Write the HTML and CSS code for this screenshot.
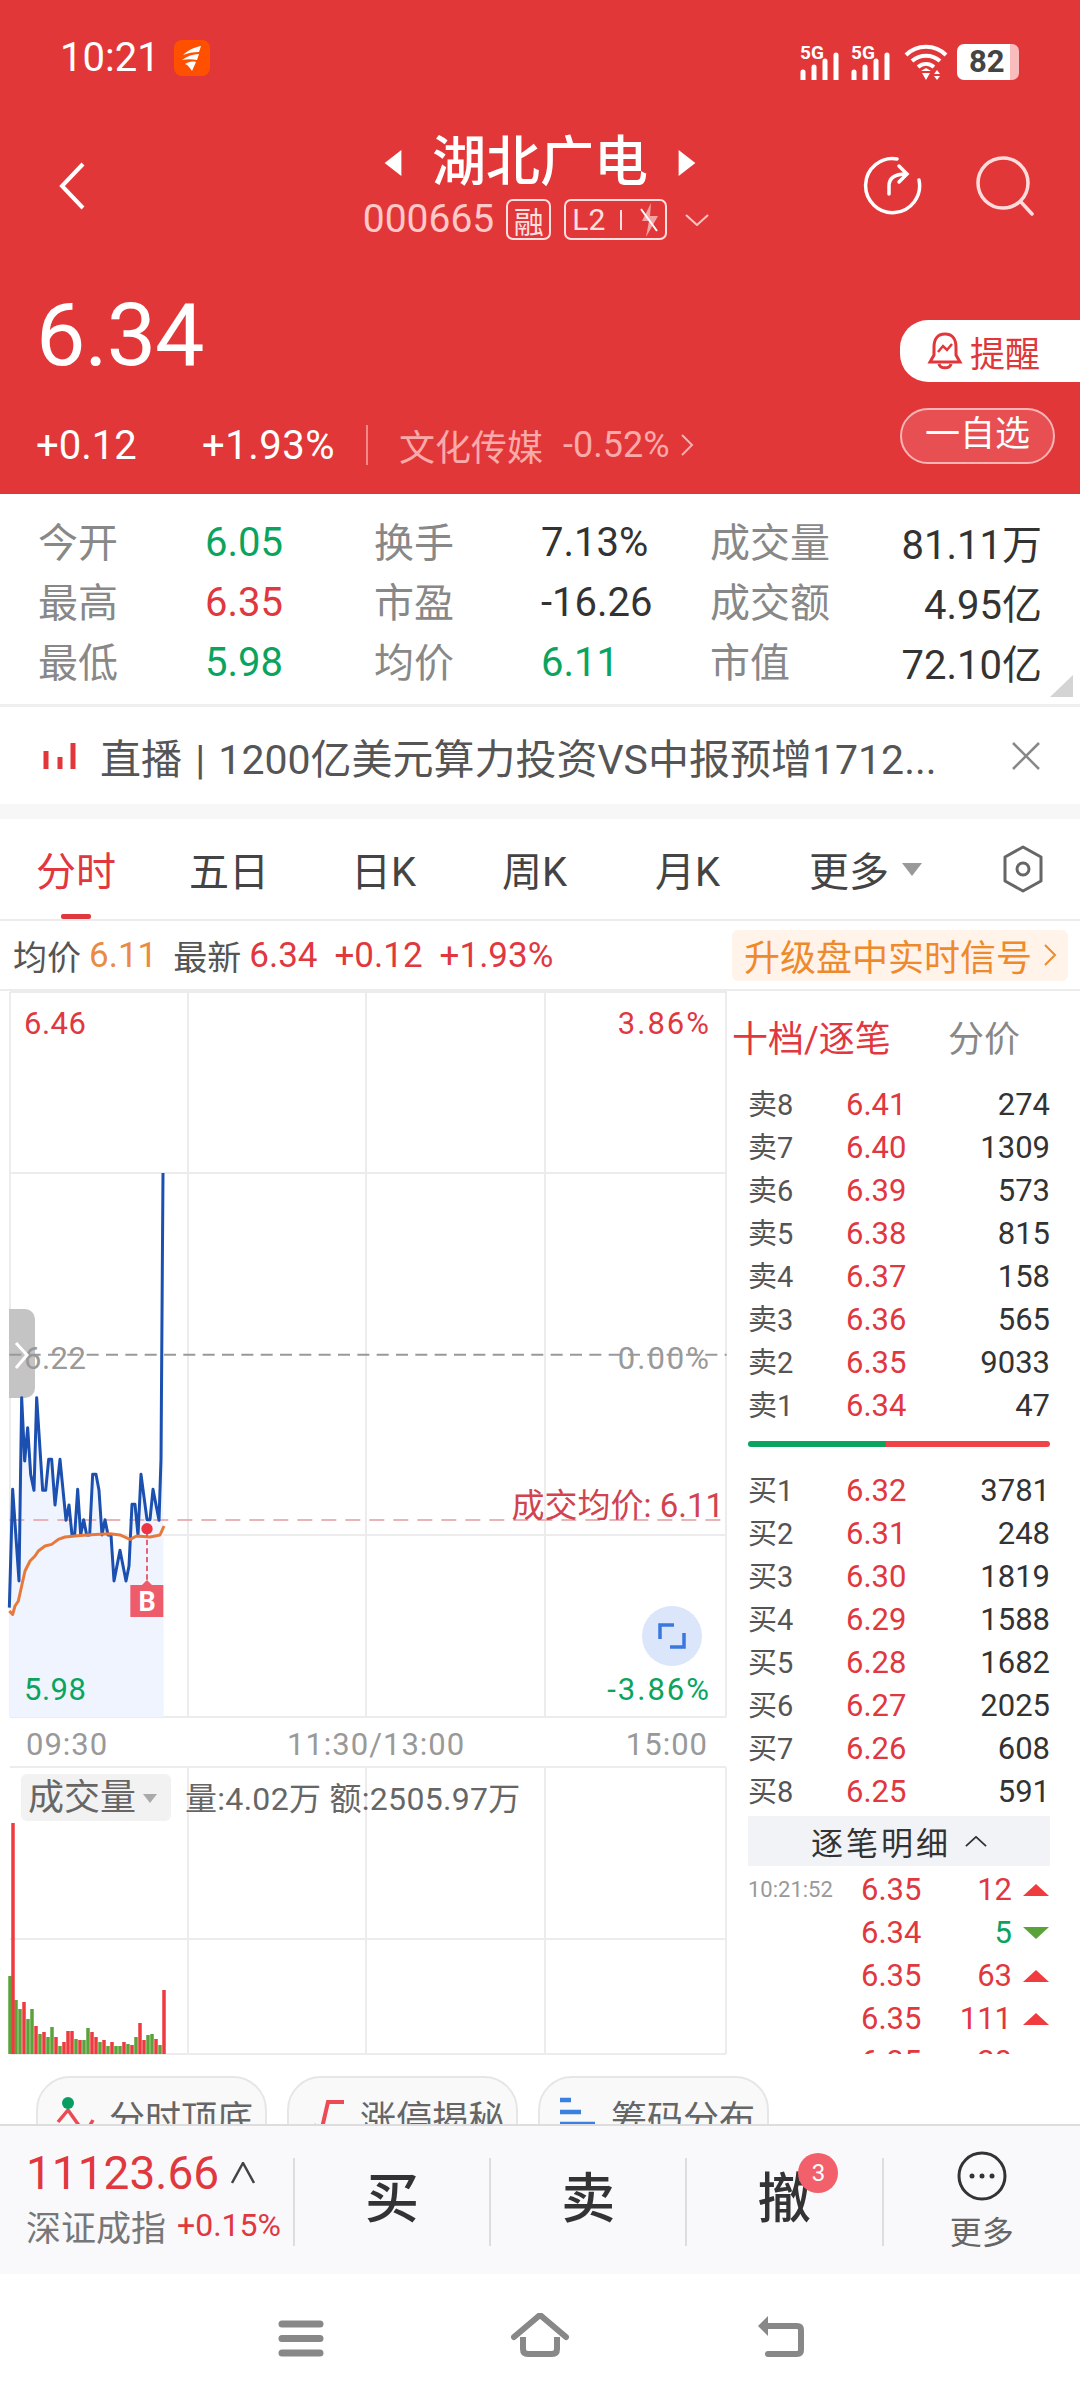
FILE: index.html
```html
<!DOCTYPE html>
<html lang="zh-CN">
<head>
    <meta charset="UTF-8">
    <meta name="viewport" content="width=device-width, initial-scale=1.0">
    <title>湖北广电</title>
    <link rel="stylesheet" href="styles.css">
</head>
<body>
<div class="phone">
    <header class="head">
        <div class="status">
            <span class="clock">10:21</span>
            <svg class="app-icon" viewBox="0 0 36 36">
                <rect width="36" height="36" rx="8" fill="#ff5000"/>
                <path d="M9 15 C14 10 21 7 27 6 L25 12 C19 12 14 13 9 15Z M8 20 C13 16 19 14 25 14 L23 20 C18 19 13 19 8 20Z M11 24 C14 22 18 21 22 22 L18 31 C16 28 14 25 11 24Z" fill="#fff"/>
            </svg>
            <div class="status-right">
                <svg class="signal" viewBox="0 -8 42 44"><text x="0" y="15" class="sig-text">5G</text><path d="M3 36V28M14 36V23M25 36V17M36 36V11" stroke="#fff" stroke-width="5" stroke-linecap="round"/></svg>
                <svg class="signal" viewBox="0 -8 42 44"><text x="0" y="15" class="sig-text">5G</text><path d="M3 36V28M14 36V23M25 36V17M36 36V11" stroke="#fff" stroke-width="5" stroke-linecap="round"/></svg>
                <svg class="wifi" viewBox="0 0 44 36">
                    <path d="M2 11 C13 0 31 0 42 11M8 17 C16 10 28 10 36 17M14 23 C19 19 25 19 30 23" fill="none" stroke="#fff" stroke-width="4"/>
                    <path d="M17 27 L22 24 L27 27Z M18 29 H26 L22 36Z M30 30 L33 26 L36 30Z M30 32 H36 L33 36Z" fill="#fff"/>
                </svg>
                <div class="battery"><span class="battery-num">82</span></div>
            </div>
        </div>
        <div class="nav">
            <svg class="back" viewBox="0 0 28 48"><path d="M25 2 L4 24 L25 46" fill="none" stroke="#fff" stroke-width="4"/></svg>
            <div class="nav-mid">
                <div class="title-row">
                    <svg class="title-arrow" viewBox="0 0 18 28"><path d="M18 0V28L0 14Z" fill="#fff"/></svg>
                    <span class="title">湖北广电</span>
                    <svg class="title-arrow" viewBox="0 0 18 28"><path d="M0 0V28L18 14Z" fill="#fff"/></svg>
                </div>
                <div class="code-row">
                    <span class="code">000665</span>
                    <span class="tag tag-rong">融</span>
                    <span class="tag tag-l2">L2<i class="tag-bar"></i><svg class="bolt" viewBox="0 0 22 34"><path d="M13 0 L4 18 H11 L8 34 L20 13 H12 Z" fill="#f4a3a3"/><path d="M3 6 L19 28" stroke="#fff" stroke-width="2"/></svg></span>
                    <svg class="code-down" viewBox="0 0 24 12"><path d="M1 1 L12 11 L23 1" fill="none" stroke="#ffc4c4" stroke-width="2"/></svg>
                </div>
            </div>
            <div class="nav-right">
                <svg class="nav-icon" viewBox="0 0 60 60"><path d="M34 3 A27 27 0 1 0 56 24" fill="none" stroke="#fff" stroke-width="3.500" stroke-linecap="round"/><path d="M26 38 V30 C26 22 32 18 43 18 M36 10 L44 18 L36 26" fill="none" stroke="#fff" stroke-width="3.500" stroke-linecap="round"/></svg>
                <svg class="nav-icon search" viewBox="0 0 60 60"><circle cx="27" cy="27" r="25" fill="none" stroke="#ffdcdc" stroke-width="3.500"/><path d="M45 46 L56 58" stroke="#ffdcdc" stroke-width="3.500" stroke-linecap="round"/></svg>
            </div>
        </div>
        <div class="quote">
            <div class="quote-left">
                <div class="price">6.34</div>
                <div class="change-row">
                    <span class="chg-a">+0.12</span>
                    <span class="chg-b">+1.93%</span>
                    <i class="chg-line"></i>
                    <span class="sector">文化传媒</span>
                    <span class="sector-pct">-0.52%</span>
                    <svg class="sector-arrow" viewBox="0 0 14 24"><path d="M2 2 L12 12 L2 22" fill="none" stroke="#f7b0b0" stroke-width="2"/></svg>
                </div>
            </div>
            <div class="quote-right">
                <div class="remind">
                    <svg class="bell" viewBox="0 0 36 40"><path d="M18 3 C10 3 7 9 7 16 V24 L3 31 H33 L29 24 V16 C29 9 26 3 18 3Z M12 33 C13 38 23 38 24 33" fill="none" stroke="#e1373a" stroke-width="3"/><path d="M11 21 L16 15 L20 19 L25 13" fill="none" stroke="#e1373a" stroke-width="2.500"/></svg>
                    <span>提醒</span>
                </div>
                <div class="watch">一自选</div>
            </div>
        </div>
    </header>

    <section class="stats">
        <span class="lab">今开</span><span class="val down">6.05</span>
        <span class="lab">换手</span><span class="val">7.13%</span>
        <span class="lab">成交量</span><span class="val right">81.11万</span>
        <span class="lab">最高</span><span class="val up">6.35</span>
        <span class="lab">市盈</span><span class="val">-16.26</span>
        <span class="lab">成交额</span><span class="val right">4.95亿</span>
        <span class="lab">最低</span><span class="val down">5.98</span>
        <span class="lab">均价</span><span class="val down">6.11</span>
        <span class="lab">市值</span><span class="val right">72.10亿</span>
        <i class="corner"></i>
    </section>

    <section class="news">
        <svg class="news-icon" viewBox="0 0 33 26"><path d="M3 8V26M17 14V26M30 0V26" stroke="#e1373a" stroke-width="5"/></svg>
        <span class="news-text">直播 | 1200亿美元算力投资VS中报预增1712...</span>
        <svg class="news-close" viewBox="0 0 28 28"><path d="M1 1 L27 27 M27 1 L1 27" stroke="#888" stroke-width="2.500"/></svg>
    </section>

    <nav class="tabs">
        <span class="tab active">分时</span>
        <span class="tab">五日</span>
        <span class="tab">日K</span>
        <span class="tab">周K</span>
        <span class="tab">月K</span>
        <span class="tab">更多<i class="tab-tri"></i></span>
        <svg class="hex" viewBox="0 0 42 48"><path d="M21 2 L39 12 V36 L21 46 L3 36 V12Z" fill="none" stroke="#666" stroke-width="3" stroke-linejoin="round"/><circle cx="21" cy="24" r="6" fill="none" stroke="#666" stroke-width="3"/></svg>
    </nav>

    <section class="info">
        <span class="info-lab">均价</span><span class="info-val orange">6.11</span>
        <span class="info-lab gap-l">最新</span><span class="info-val up">6.34</span>
        <span class="info-val up gap-m">+0.12</span>
        <span class="info-val up gap-m">+1.93%</span>
        <div class="signal-box"><span>升级盘中实时信号</span><svg class="signal-arrow" viewBox="0 0 14 24"><path d="M2 2 L12 12 L2 22" fill="none" stroke="#f08a2c" stroke-width="2"/></svg></div>
    </section>

    <main class="market">
        <svg class="chart" viewBox="0 0 727 1065">
            <g class="grid">
                <path d="M10 1V726M188 0V726M366 0V726M545 0V726M726 0V726"/>
                <path d="M10 1H726M10 182H726M10 544H726M10 726H726"/>
                <path d="M10 776H726M188 776V1063M366 776V1063M545 776V1063M726 776V1063M10 948H726M10 1063H726"/>
            </g>
            <path d="M9 318 H25 A10 10 0 0 1 35 328 V397 A10 10 0 0 1 25 407 H9Z" fill="#c4c4c4"/>
            <g transform="translate(0 290) scale(0.33333)">
                <polygon class="area" points="28,980 38,625 57,900 65,350 74,540 83,440 92,580 102,628 110,350 128,628 137,628 146,535 155,535 165,672 180,535 198,718 207,672 216,762 224,762 233,625 242,762 251,716 260,762 269,762 278,580 288,580 297,628 306,762 315,716 324,762 333,762 342,900 360,808 378,900 387,855 396,670 405,670 414,762 423,580 441,716 450,716 459,625 477,718 483,535 489,-324 491,1308 28,1308"/>
                <path class="dash-gray-thick" d="M28 221H2180"/>
                <path class="dash-pink" d="M28 717H2180"/>
                <polyline class="price-line" points="28,980 38,625 57,900 65,350 74,540 83,440 92,580 102,628 110,350 128,628 137,628 146,535 155,535 165,672 180,535 198,718 207,672 216,762 224,762 233,625 242,762 251,716 260,762 269,762 278,580 288,580 297,628 306,762 315,716 324,762 333,762 342,900 360,808 378,900 387,855 396,670 405,670 414,762 423,580 441,716 450,716 459,625 477,718 483,535 489,-324"/>
                <polyline class="avg-line" points="28,990 38,1000 45,975 55,960 65,915 75,870 90,840 105,825 115,810 135,795 155,790 175,775 195,768 225,765 260,762 300,760 330,758 360,762 390,775 410,765 450,768 480,762 492,735"/>
                <path class="dash-red" d="M441 750V900"/>
                <circle cx="441" cy="743" r="17" fill="#ee3344"/>
                <path d="M391 912 H426 L441 897 L456 912 H490 V1008 H391Z" fill="#ee5c6c"/>
            </g>
            <text x="147" y="620" class="b-mark" text-anchor="middle">B</text>

            <text x="24" y="43" class="axis up">6.46</text>
            <text x="711" y="43" class="axis pct up" text-anchor="end">3.86%</text>
            <text x="24" y="378" class="axis gray">6.22</text>
            <text x="711" y="378" class="axis pct gray" text-anchor="end">0.00%</text>
            <text x="24" y="709" class="axis down">5.98</text>
            <text x="711" y="709" class="axis pct down" text-anchor="end">-3.86%</text>
            <text x="724" y="526" class="avg-label" text-anchor="end">成交均价: 6.11</text>

            <path d="M16 352 L27 364 L16 377" fill="none" stroke="#fff" stroke-width="3"/>

            <circle cx="672" cy="645" r="30" fill="#dbe6fb"/>
            <path d="M660 648 V634 H674 M684 642 V656 H670" fill="none" stroke="#3a78e0" stroke-width="3.500"/>

            <text x="26" y="764" class="time">09:30</text>
            <text x="287" y="764" class="time">11:30/13:00</text>
            <text x="708" y="764" class="time" text-anchor="end">15:00</text>

            <rect x="21" y="783" width="150" height="47" rx="6" fill="#f2f2f2"/>
            <text x="28" y="819" class="vol-name">成交量</text>
            <path d="M143 803 H157 L150 812Z" fill="#aaa"/>
            <text x="185" y="819" class="vol-text">量:4.02万 额:2505.97万</text>

            <path class="vol-green" d="M10 1063v-78M16 1063v-54M20 1063v-45M28 1063v-35M32 1063v-45M40 1063v-20M48 1063v-17M52 1063v-27M60 1063v-8M76 1063v-15M84 1063v-14M88 1063v-26M100 1063v-12M108 1063v-8M116 1063v-8M120 1063v-8M128 1063v-10M136 1063v-17M148 1063v-19M152 1063v-20M160 1063v-9"/>
            <path class="vol-red" d="M13 1063v-231M24 1063v-52M36 1063v-28M44 1063v-22M56 1063v-17M64 1063v-12M68 1063v-23M72 1063v-23M80 1063v-14M92 1063v-22M96 1063v-17M104 1063v-14M112 1063v-12M124 1063v-12M132 1063v-9M140 1063v-31M144 1063v-14M156 1063v-15M164 1063v-64"/>
        </svg>

        <aside class="book">
            <div class="book-tabs"><span class="book-tab-on">十档/逐笔</span><span class="book-tab">分价</span></div>
            <div class="row"><span class="row-lab">卖8</span><span class="up">6.41</span><span class="qty">274</span></div>
            <div class="row"><span class="row-lab">卖7</span><span class="up">6.40</span><span class="qty">1309</span></div>
            <div class="row"><span class="row-lab">卖6</span><span class="up">6.39</span><span class="qty">573</span></div>
            <div class="row"><span class="row-lab">卖5</span><span class="up">6.38</span><span class="qty">815</span></div>
            <div class="row"><span class="row-lab">卖4</span><span class="up">6.37</span><span class="qty">158</span></div>
            <div class="row"><span class="row-lab">卖3</span><span class="up">6.36</span><span class="qty">565</span></div>
            <div class="row"><span class="row-lab">卖2</span><span class="up">6.35</span><span class="qty">9033</span></div>
            <div class="row"><span class="row-lab">卖1</span><span class="up">6.34</span><span class="qty">47</span></div>
            <div class="ratio"><i class="ratio-buy"></i><i class="ratio-sell"></i></div>
            <div class="row"><span class="row-lab">买1</span><span class="up">6.32</span><span class="qty">3781</span></div>
            <div class="row"><span class="row-lab">买2</span><span class="up">6.31</span><span class="qty">248</span></div>
            <div class="row"><span class="row-lab">买3</span><span class="up">6.30</span><span class="qty">1819</span></div>
            <div class="row"><span class="row-lab">买4</span><span class="up">6.29</span><span class="qty">1588</span></div>
            <div class="row"><span class="row-lab">买5</span><span class="up">6.28</span><span class="qty">1682</span></div>
            <div class="row"><span class="row-lab">买6</span><span class="up">6.27</span><span class="qty">2025</span></div>
            <div class="row"><span class="row-lab">买7</span><span class="up">6.26</span><span class="qty">608</span></div>
            <div class="row"><span class="row-lab">买8</span><span class="up">6.25</span><span class="qty">591</span></div>
            <div class="detail-head"><span>逐笔明细</span><svg class="detail-up" viewBox="0 0 24 12"><path d="M1 11 L12 1 L23 11" fill="none" stroke="#333" stroke-width="2"/></svg></div>
            <div class="tick"><span class="tick-time">10:21:52</span><span class="up">6.35</span><span class="tick-qty up">12</span><i class="tri-up"></i></div>
            <div class="tick"><span class="tick-time"></span><span class="up">6.34</span><span class="tick-qty down">5</span><i class="tri-down"></i></div>
            <div class="tick"><span class="tick-time"></span><span class="up">6.35</span><span class="tick-qty up">63</span><i class="tri-up"></i></div>
            <div class="tick"><span class="tick-time"></span><span class="up">6.35</span><span class="tick-qty up">111</span><i class="tri-up"></i></div>
            <div class="tick"><span class="tick-time"></span><span class="up">6.35</span><span class="tick-qty up">20</span><i class="tri-up"></i></div>
        </aside>
    </main>

    <section class="chips">
        <div class="chip">
            <svg class="chip-icon" viewBox="0 0 40 48"><path d="M3 32 L13 20 L30 44 L38 30" fill="none" stroke="#ec4a55" stroke-width="3.500"/><circle cx="13" cy="13" r="6" fill="#0a9d62"/><circle cx="27" cy="45" r="6" fill="#ec4a55"/></svg>
            <span>分时顶底</span>
        </div>
        <div class="chip">
            <svg class="chip-icon" viewBox="0 0 40 48"><path d="M4 50 L10 36 L16 38 L22 12 H38" fill="none" stroke="#ec4a55" stroke-width="4"/></svg>
            <span>涨停揭秘</span>
        </div>
        <div class="chip">
            <svg class="chip-icon" viewBox="0 0 40 48"><path d="M3 10H14M3 22H24M3 34H38" stroke="#3a80e0" stroke-width="4.500"/><path d="M3 46H14" stroke="#ec4a55" stroke-width="4.500"/></svg>
            <span>筹码分布</span>
        </div>
    </section>

    <section class="trade">
        <div class="index">
            <div class="index-top"><span class="index-num">11123.66</span><svg class="index-up" viewBox="0 0 24 22"><path d="M1 21 L12 1 L23 21" fill="none" stroke="#444" stroke-width="2.500"/></svg></div>
            <div class="index-bottom"><span class="index-name">深证成指</span><span class="index-pct">+0.15%</span></div>
        </div>
        <div class="action"><span class="action-text">买</span></div>
        <div class="action"><span class="action-text">卖</span></div>
        <div class="action"><span class="action-text">撤</span><span class="badge">3</span></div>
        <div class="action more">
            <svg class="more-icon" viewBox="0 0 50 50"><circle cx="25" cy="25" r="23" fill="none" stroke="#333" stroke-width="3"/><circle cx="15" cy="25" r="2.500" fill="#333"/><circle cx="25" cy="25" r="2.500" fill="#333"/><circle cx="35" cy="25" r="2.500" fill="#333"/></svg>
            <span class="more-text">更多</span>
        </div>
    </section>

    <footer class="sysnav">
        <svg class="sys-menu" viewBox="0 0 46 37"><path d="M4 4H42M4 18.500H42M4 33H42" stroke="#888" stroke-width="7" stroke-linecap="round"/></svg>
        <svg class="sys-home" viewBox="0 0 58 44"><path d="M3 24 L29 2 L55 24" fill="none" stroke="#888" stroke-width="6" stroke-linecap="round" stroke-linejoin="round"/><path d="M12 24V36 Q12 41 17 41 H41 Q46 41 46 36 V24" fill="none" stroke="#888" stroke-width="6"/></svg>
        <svg class="sys-back" viewBox="0 0 48 42"><path d="M2 11 L12 1 V21Z" fill="#888"/><path d="M8 11 H41 Q45 11 45 15 V35 Q45 39 41 39 H12" fill="none" stroke="#888" stroke-width="6" stroke-linecap="round"/></svg>
    </footer>
</div>
</body>
</html>
```

FILE: styles.css
```css
* {
    box-sizing: border-box;
}
html, body {
    margin: 0;
    padding: 0;
}
body {
    background-color: #fff;
    font-family: Roboto, "Noto Sans CJK SC", sans-serif;
    color: #333;
}
i {
    display: block;
}
svg {
    display: block;
    flex: none;
}
.phone {
    width: 1080px;
    height: 2400px;
    overflow: hidden;
}
.up {
    color: #e1373f;
    fill: #e1373f;
}
.down {
    color: #0aa45f;
    fill: #0aa45f;
}
.gray {
    fill: #999;
}
.orange {
    color: #ea8b45;
}

/* red header */
.head {
    height: 494px;
    background-color: #e23739;
    color: #fff;
}
.status {
    height: 116px;
    display: flex;
    align-items: center;
    padding-left: 60px;
}
.clock {
    font-size: 40px;
    line-height: 48px;
    width: 114px;
}
.app-icon {
    width: 36px;
    height: 36px;
}
.status-right {
    margin-left: auto;
    margin-right: 61px;
    display: flex;
    align-items: flex-end;
}
.signal {
    width: 42px;
    height: 44px;
    margin-right: 9px;
}
.sig-text {
    font-size: 19px;
    font-weight: 700;
    fill: #fff;
}
.wifi {
    width: 44px;
    height: 36px;
    margin-left: 2px;
    margin-right: 9px;
}
.battery {
    width: 62px;
    height: 36px;
    border-radius: 7px;
    background: linear-gradient(90deg, #fff 86%, #f8bcbc 86%);
    padding-left: 12px;
}
.battery-num {
    font-size: 31px;
    line-height: 36px;
    font-weight: 700;
    color: #444;
}
.nav {
    height: 134px;
    display: grid;
    grid-template-columns: 1fr auto 1fr;
    align-items: start;
    padding-top: 16px;
}
.back {
    width: 28px;
    height: 48px;
    margin: 30px 0 0 58px;
}
.nav-mid {
    display: flex;
    flex-direction: column;
    align-items: center;
}
.title-row {
    display: flex;
    align-items: center;
    height: 60px;
    margin-top: 1px;
}
.title {
    font-size: 54px;
    line-height: 60px;
    font-weight: 500;
    margin: 0 30px;
}
.title-arrow {
    width: 18px;
    height: 26px;
}
.code-row {
    display: flex;
    align-items: center;
    height: 41px;
    margin-top: 6px;
    margin-right: 8px;
}
.code {
    font-size: 39px;
    line-height: 41px;
    color: #ffc9c9;
    margin-right: 12px;
}
.tag {
    height: 41px;
    border: 2px solid #ffe0e0;
    border-radius: 7px;
    display: flex;
    align-items: center;
    color: #ffe0e0;
}
.tag-rong {
    width: 45px;
    justify-content: center;
    font-size: 30px;
    margin-right: 13px;
}
.tag-l2 {
    width: 103px;
    padding-left: 6px;
    font-size: 30px;
    margin-right: 18px;
}
.tag-bar {
    width: 2px;
    height: 20px;
    background-color: #ffe0e0;
    margin: 0 16px 0 15px;
}
.bolt {
    width: 22px;
    height: 34px;
}
.code-down {
    width: 24px;
    height: 12px;
}
.nav-right {
    display: flex;
    justify-content: flex-end;
    margin-top: 24px;
    padding-right: 44px;
}
.nav-icon {
    width: 60px;
    height: 60px;
}
.search {
    margin-left: 53px;
}
.quote {
    height: 244px;
    display: flex;
    justify-content: space-between;
}
.quote-left {
    padding: 40px 0 0 36px;
}
.price {
    font-size: 88px;
    line-height: 90px;
    letter-spacing: -1px;
}
.change-row {
    display: flex;
    align-items: center;
    height: 60px;
    margin-top: 35px;
}
.chg-a, .chg-b {
    font-size: 40px;
}
.chg-a {
    width: 166px;
}
.chg-b {
    width: 164px;
    letter-spacing: 0.5px;
}
.chg-line {
    width: 2px;
    height: 40px;
    background-color: #f08a8a;
    margin-right: 31px;
}
.sector {
    font-size: 36px;
    color: #f8aaaa;
    margin-right: 20px;
}
.sector-pct {
    font-size: 36px;
    color: #f8aaaa;
    margin-right: 10px;
}
.sector-arrow {
    width: 14px;
    height: 24px;
}
.quote-right {
    width: 180px;
    padding-top: 70px;
}
.remind {
    height: 62px;
    background-color: #fff;
    border-radius: 28px 0 0 28px;
    display: flex;
    align-items: center;
    padding-left: 27px;
    font-size: 35px;
    color: #e1373a;
}
.bell {
    width: 36px;
    height: 40px;
    margin-right: 7px;
}
.watch {
    width: 155px;
    height: 56px;
    margin-top: 26px;
    border: 2px solid #f8b5b5;
    border-radius: 28px;
    background-color: #e84f52;
    font-size: 35px;
    line-height: 50px;
    text-align: center;
}

/* stats table */
.stats {
    position: relative;
    height: 213px;
    border-bottom: 3px solid #efefef;
    padding: 18px 38px 0;
    display: grid;
    grid-template-columns: 167px 169px 167px 169px 120px 1fr;
    grid-auto-rows: 60px;
    align-items: center;
    font-size: 40px;
}
.lab {
    color: #888;
    padding-bottom: 5px;
}
.val {
    font-size: 40px;
    color: #333;
}
.val.up {
    color: #e1373f;
}
.val.down {
    color: #0aa45f;
}
.right {
    text-align: right;
}
.corner {
    position: absolute;
    right: 7px;
    bottom: 7px;
    width: 0;
    height: 0;
    border-left: 23px solid transparent;
    border-bottom: 22px solid #d4d4d4;
}

/* news strip */
.news {
    height: 97px;
    display: flex;
    align-items: center;
    padding-left: 43px;
}
.news-icon {
    width: 33px;
    height: 26px;
    margin-right: 24px;
}
.news-text {
    width: 912px;
    font-size: 41px;
    word-spacing: 3px;
    color: #555;
    white-space: nowrap;
}
.news-close {
    width: 28px;
    height: 28px;
}

/* period tabs */
.tabs {
    border-top: 15px solid #f7f7f7;
    height: 117px;
    border-bottom: 2px solid #ececec;
    display: grid;
    grid-template-columns: 153px 162px 151px 153px 154px 193px auto;
    align-items: center;
    padding-left: 36px;
    font-size: 40px;
}
.tab {
    position: relative;
    display: flex;
    align-items: center;
    height: 100px;
    color: #444;
}
.tab.active {
    color: #e1373f;
}
.tab.active::after {
    content: "";
    position: absolute;
    left: 25px;
    bottom: 0;
    width: 30px;
    height: 5px;
    border-radius: 2px;
    background-color: #e1373f;
}
.tab-tri {
    margin-left: 13px;
    width: 0;
    height: 0;
    border-left: 10px solid transparent;
    border-right: 10px solid transparent;
    border-top: 13px solid #999;
}
.hex {
    width: 42px;
    height: 48px;
}

/* info line */
.info {
    height: 70px;
    border-bottom: 2px solid #ececec;
    display: flex;
    align-items: center;
    padding: 0 12px 0 13px;
    font-size: 34px;
    white-space: nowrap;
}
.info-lab {
    color: #555;
    margin-right: 8px;
}
.info-val {
    font-size: 35px;
}
.gap-l {
    margin-left: 16px;
}
.gap-m {
    margin-left: 17px;
}
.signal-box {
    margin-left: auto;
    width: 336px;
    height: 51px;
    border-radius: 6px;
    background-color: #fff3ea;
    color: #ef8a2c;
    font-size: 36px;
    display: flex;
    align-items: center;
    padding-left: 12px;
}
.signal-arrow {
    width: 14px;
    height: 24px;
    margin-left: 11px;
}

/* chart + order book */
.market {
    height: 1065px;
    display: flex;
}
.chart {
    width: 727px;
    height: 1065px;
}
.grid path {
    fill: none;
    stroke: #ececec;
    stroke-width: 2;
}
.area {
    fill: #eff4fe;
}
.price-line {
    fill: none;
    stroke: #1b4fb0;
    stroke-width: 9;
    stroke-linejoin: round;
}
.avg-line {
    fill: none;
    stroke: #e8793c;
    stroke-width: 9;
    stroke-linejoin: round;
}
.dash-gray-thick {
    stroke: #999;
    stroke-width: 6;
    stroke-dasharray: 36 22;
}
.dash-pink {
    stroke: #eab3b8;
    stroke-width: 6;
    stroke-dasharray: 45 27;
}
.dash-red {
    stroke: #e0475a;
    stroke-width: 5;
    stroke-dasharray: 16 10;
}
.b-mark {
    font-size: 27px;
    font-weight: 700;
    fill: #fff;
}
.axis {
    font-size: 31px;
    letter-spacing: 0.5px;
}
.axis.pct {
    letter-spacing: 2px;
}
.avg-label {
    font-size: 33px;
    fill: #d0434f;
}
.time {
    font-size: 31px;
    letter-spacing: 1px;
    fill: #999;
}
.vol-name {
    font-size: 36px;
    fill: #666;
}
.vol-text {
    font-size: 32px;
    letter-spacing: 0.3px;
    fill: #666;
}
.vol-green, .vol-red {
    fill: none;
    stroke-width: 3.5;
}
.vol-green {
    stroke: #5aa23a;
}
.vol-red {
    stroke: #ee3b3f;
}
.book {
    flex: 1;
    height: 1063px;
    overflow: hidden;
    padding: 0 30px 0 21px;
}
.book-tabs {
    height: 90px;
    display: flex;
    align-items: center;
    margin-left: -16px;
    font-size: 36px;
}
.book-tab-on {
    color: #e1373f;
    width: 216px;
}
.book-tab {
    color: #888;
}
.row {
    height: 43px;
    display: grid;
    grid-template-columns: 98px 1fr auto;
    align-items: center;
    font-size: 31px;
}
.row-lab {
    font-size: 29px;
    color: #555;
    padding-bottom: 4px;
}
.qty {
    color: #333;
}
.ratio {
    height: 6px;
    margin: 16px 0 20px;
    display: flex;
}
.ratio-buy {
    width: 138px;
    background-color: #0aa45f;
    border-radius: 3px 0 0 3px;
}
.ratio-sell {
    flex: 1;
    background-color: #ef4348;
    border-radius: 0 3px 3px 0;
}
.detail-head {
    height: 50px;
    margin: 5px 0 2px;
    background-color: #f1f3f7;
    display: flex;
    align-items: center;
    justify-content: center;
    font-size: 32px;
    letter-spacing: 3px;
    color: #333;
}
.detail-up {
    width: 22px;
    height: 11px;
    margin-left: 14px;
}
.tick {
    height: 43px;
    display: grid;
    grid-template-columns: 113px 61px 90px auto;
    align-items: center;
    font-size: 31px;
}
.tick-time {
    font-size: 22px;
    color: #999;
}
.tick-qty {
    text-align: right;
}
.tri-up, .tri-down {
    width: 0;
    height: 0;
    margin-left: 11px;
    border-left: 13px solid transparent;
    border-right: 13px solid transparent;
}
.tri-up {
    border-bottom: 12px solid #f03b3f;
}
.tri-down {
    border-top: 12px solid #5aa23a;
}

/* feature chips, cut off by the trade bar */
.chips {
    height: 68px;
    overflow: hidden;
    padding: 20px 0 0 36px;
    display: flex;
    gap: 20px;
}
.chip {
    width: 231px;
    height: 90px;
    border: 2px solid #e6e6e6;
    border-radius: 34px;
    background-color: #f9f9f9;
    display: flex;
    padding: 12px 0 0 17px;
    font-size: 36px;
    color: #666;
}
.chip-icon {
    width: 40px;
    height: 48px;
    margin-right: 14px;
}

/* trade bar */
.trade {
    height: 150px;
    border-top: 2px solid #ddd;
    background-color: #f9f9fb;
    display: flex;
    padding-top: 32px;
}
.index {
    width: 296px;
    height: 88px;
    padding-left: 26px;
    border-right: 2px solid #ddd;
    white-space: nowrap;
}
.index-top {
    display: flex;
    align-items: center;
    height: 44px;
    margin-top: -7px;
}
.index-num {
    font-size: 46px;
    line-height: 44px;
    color: #e1373f;
}
.index-up {
    width: 24px;
    height: 22px;
    margin-left: 12px;
}
.index-bottom {
    display: flex;
    align-items: center;
    height: 44px;
    margin-top: 8px;
}
.index-name {
    font-size: 35px;
    color: #777;
    margin-right: 11px;
}
.index-pct {
    font-size: 32px;
    color: #e1373f;
}
.action {
    position: relative;
    width: 197px;
    height: 88px;
    border-right: 2px solid #ddd;
    display: flex;
    align-items: center;
    justify-content: center;
    color: #333;
}
.action-text {
    font-size: 54px;
    line-height: 60px;
    font-weight: 500;
    padding-bottom: 4px;
}
.badge {
    position: absolute;
    left: 111px;
    top: -5px;
    width: 40px;
    height: 40px;
    border-radius: 50%;
    background-color: #f2616b;
    color: #fff;
    font-size: 24px;
    line-height: 40px;
    text-align: center;
}
.more {
    border-right: none;
    flex-direction: column;
    justify-content: flex-start;
}
.more-icon {
    width: 50px;
    height: 50px;
    margin-top: -7px;
}
.more-text {
    margin-top: 12px;
    font-size: 32px;
    line-height: 40px;
    color: #666;
}

/* system nav */
.sysnav {
    height: 127px;
    display: flex;
    padding-top: 39px;
}
.sys-menu {
    width: 46px;
    height: 37px;
    margin: 7px 0 0 278px;
}
.sys-home {
    width: 58px;
    height: 44px;
    margin-left: 187px;
}
.sys-back {
    width: 48px;
    height: 42px;
    margin: 2px 0 0 187px;
}
```
